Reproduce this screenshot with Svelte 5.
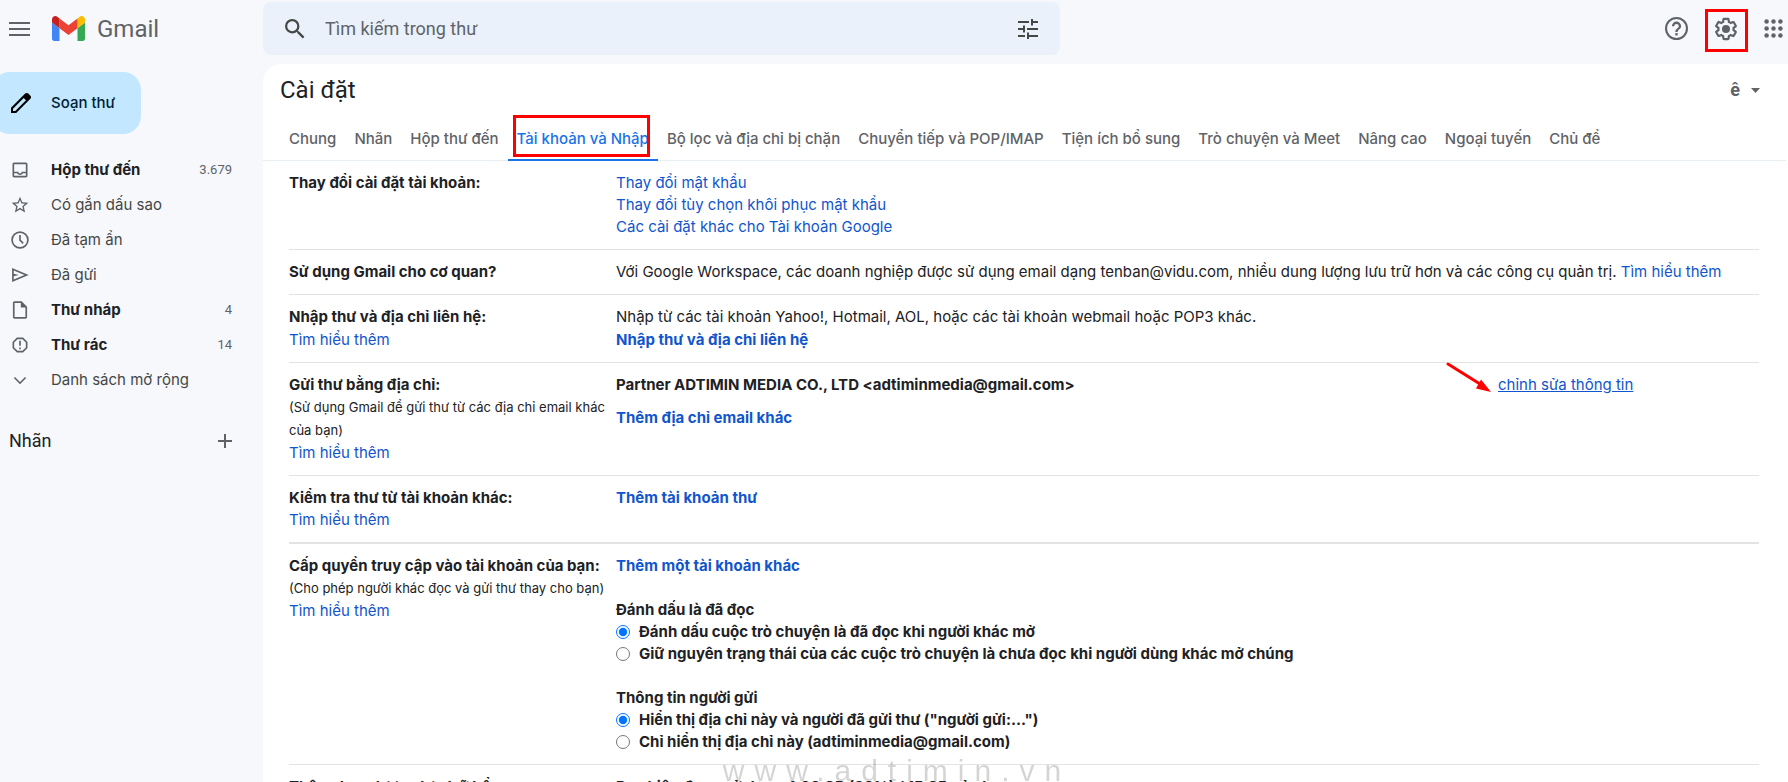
<script lang="ts">
  let query = '';
  let markRead = 'read';
  let sender = 'both';

  const folders = [
    { label: 'Hộp thư đến', icon: 'inbox', count: '3.679', bold: true },
    { label: 'Có gắn dấu sao', icon: 'star', count: '', bold: false },
    { label: 'Đã tạm ẩn', icon: 'clock', count: '', bold: false },
    { label: 'Đã gửi', icon: 'send', count: '', bold: false },
    { label: 'Thư nháp', icon: 'draft', count: '4', bold: true },
    { label: 'Thư rác', icon: 'spam', count: '14', bold: true },
    { label: 'Danh sách mở rộng', icon: 'more', count: '', bold: false }
  ];

  const icons: Record<string, string> = {
    inbox: 'M19 3H5c-1.1 0-2 .9-2 2v14c0 1.100.9 2 2 2h14c1.100 0 2-.9 2-2V5c0-1.100-.9-2-2-2zm0 16H5v-3h3.560c.69 1.190 1.970 2 3.450 2s2.750-.81 3.450-2H19v3zm0-5h-4.990c0 1.100-.9 2-2 2s-2-.9-2-2H5V5h14v9z',
    star: 'M22 9.240l-7.190-.62L12 2 9.190 8.630 2 9.240l5.460 4.730L5.820 21 12 17.270 18.180 21l-1.630-7.030L22 9.240zM12 15.400l-3.760 2.270 1-4.280-3.320-2.880 4.380-.38L12 6.100l1.710 4.040 4.380.38-3.320 2.880 1 4.280L12 15.400z',
    clock: 'M12 1.500a10.500 10.500 0 1 0 0 21 10.500 10.500 0 0 0 0-21zm0 19a8.500 8.500 0 1 1 0-17 8.500 8.500 0 0 1 0 17zM13 6h-2v6.500l4.200 4.200 1.300-1.300-3.500-3.600V6z',
    send: 'M2.500 3.500v17L22.500 12l-20-8.500zM4.500 6.500L17.400 12 4.500 17.500V13.500l6-1.500-6-1.500v-4z',
    draft: 'M14 1.500H5.500c-1.100 0-2 .9-2 2v17c0 1.100.9 2 2 2h13c1.100 0 2-.9 2-2V8L14 1.500zm4.500 19h-13v-17H13V9h5.500v11.500z',
    spam: 'M15.730 3H8.270L3 8.270v7.460L8.270 21h7.460L21 15.730V8.270L15.730 3zM19 14.900L14.900 19H9.100L5 14.900V9.100L9.100 5h5.800L19 9.100v5.800zM11 7h2v6h-2zM11 15h2v2h-2z',
    more: 'M18 8.300L12 14.300 6 8.300 4.600 9.700l7.400 7.400 7.400-7.400z'
  };

  const tabs = [
    'Chung',
    'Nhãn',
    'Hộp thư đến',
    'Tài khoản và Nhập',
    'Bộ lọc và địa chỉ bị chặn',
    'Chuyển tiếp và POP/IMAP',
    'Tiện ích bổ sung',
    'Trò chuyện và Meet',
    'Nâng cao',
    'Ngoại tuyến',
    'Chủ đề'
  ];
  let active = 'Tài khoản và Nhập';

  const dots = [4, 12, 20];
</script>

<div class="app">
  <header>
    <div class="brand">
      <button class="icon" aria-label="Trình đơn chính">
        <svg viewBox="0 0 21 14" width="21" height="14"><path d="M0 0h21v2H0zM0 6h21v2H0zM0 12h21v2H0z" /></svg>
      </button>
      <a class="logo" href="#inbox">
        <svg viewBox="52 42 88 66" width="33" height="25" aria-hidden="true">
          <path fill="#4285f4" d="M58 108h14V74L52 59v43c0 3.320 2.690 6 6 6" />
          <path fill="#34a853" d="M120 108h14c3.320 0 6-2.690 6-6V59l-20 15" />
          <path fill="#fbbc04" d="M120 48v26l20-15v-8c0-7.420-8.470-11.650-14.400-7.200" />
          <path fill="#ea4335" d="M72 74V48l24 18 24-18v26L96 92" />
          <path fill="#c5221f" d="M52 51v8l20 15V48l-5.600-4.200c-5.940-4.450-14.400-.22-14.400 7.200" />
        </svg>
        <span>Gmail</span>
      </a>
    </div>

    <form class="search" on:submit|preventDefault>
      <button class="icon" aria-label="Tìm kiếm">
        <svg viewBox="3 3 18 18" width="20" height="20"><path d="M15.500 14h-.79l-.28-.27A6.470 6.470 0 0 0 16 9.500 6.500 6.500 0 1 0 9.500 16c1.610 0 3.090-.59 4.230-1.570l.27.28v.79l5 4.990L20.490 19l-4.990-5zm-6 0a4.500 4.500 0 1 1 0-9 4.500 4.500 0 0 1 0 9z" /></svg>
      </button>
      <input type="text" placeholder="Tìm kiếm trong thư" aria-label="Tìm kiếm trong thư" bind:value={query} />
      <button type="button" class="icon" aria-label="Tùy chọn tìm kiếm">
        <svg viewBox="0 0 20 20" width="20" height="20"><path d="M0 2h11v2H0zM13 0h2v2h5v2h-5v2.500h-2zM0 9h5V6.500h2v7H5V11H0zM9 9h11v2H9zM0 16h7v2H0zM9 13.500h2V16h9v2h-9v2.500H9z" /></svg>
      </button>
    </form>

    <div class="tools">
      <button class="icon" aria-label="Hỗ trợ">
        <svg viewBox="2 2 20 20" width="23" height="23"><path d="M11 18h2v-2h-2v2zm1-16a10 10 0 1 0 0 20 10 10 0 0 0 0-20zm0 18.200a8.200 8.200 0 1 1 0-16.400 8.200 8.200 0 0 1 0 16.400zM12 6a4 4 0 0 0-4 4h2a2 2 0 1 1 4 0c0 2-3 1.750-3 5h2c0-2.250 3-2.500 3-5a4 4 0 0 0-4-4z" /></svg>
      </button>
      <button class="icon marked" aria-label="Cài đặt">
        <svg viewBox="1 1 22 22" width="24" height="24">
          <path d="M13.850 22.250h-3.700c-.74 0-1.360-.54-1.450-1.270l-.27-1.890c-.27-.14-.53-.29-.79-.46l-1.800.72c-.7.26-1.470-.03-1.810-.65L2.200 15.530c-.35-.66-.2-1.440.36-1.880l1.530-1.190c-.01-.15-.02-.3-.02-.46 0-.15.01-.31.02-.46l-1.520-1.190c-.59-.45-.74-1.260-.37-1.880l1.850-3.190c.34-.62 1.110-.9 1.790-.63l1.810.73c.26-.17.52-.32.78-.46l.27-1.910c.09-.7.71-1.250 1.440-1.250h3.700c.74 0 1.360.54 1.450 1.270l.27 1.890c.27.14.53.29.79.46l1.800-.72c.71-.26 1.480.03 1.820.65l1.840 3.180c.36.66.2 1.440-.36 1.880l-1.520 1.190c.01.15.02.3.02.46s-.01.31-.02.46l1.520 1.190c.56.45.72 1.230.37 1.860l-1.860 3.220c-.34.62-1.110.9-1.800.63l-1.800-.72c-.26.17-.52.32-.78.46l-.27 1.910c-.1.68-.72 1.220-1.460 1.220zm-3.230-2h2.760l.37-2.550.53-.22c.44-.18.88-.44 1.340-.78l.45-.34 2.380.96 1.380-2.400-2.030-1.580.07-.56c.03-.26.06-.51.06-.78s-.03-.53-.06-.78l-.07-.56 2.030-1.580-1.390-2.400-2.390.96-.45-.35c-.42-.32-.87-.58-1.330-.77l-.52-.22-.37-2.550h-2.760l-.37 2.550-.53.21c-.44.19-.88.44-1.340.79l-.45.33-2.380-.95-1.390 2.390 2.030 1.580-.07.56a7 7 0 0 0-.06.79c0 .26.02.53.06.78l.07.56-2.030 1.580 1.380 2.400 2.390-.96.45.35c.43.33.86.58 1.330.77l.53.22.38 2.550z" />
          <circle cx="12" cy="12" r="3.700" />
        </svg>
      </button>
      <button class="icon" aria-label="Ứng dụng của Google">
        <svg viewBox="1 1 22 22" width="19" height="19">
          {#each dots as cy}
            {#each dots as cx}
              <circle {cx} {cy} r="2.600" />
            {/each}
          {/each}
        </svg>
      </button>
    </div>
  </header>

  <div class="body">
    <aside>
      <button class="compose">
        <svg viewBox="0 0 22 22" width="22" height="22"><path fill-rule="evenodd" d="M1 21v-5.200L15.200 1.600c.9-.9 2.200-.9 3.100 0l2.100 2.100c.9.9.9 2.200 0 3.100L6.200 21H1zm2-2h2.300L16 8.300 13.700 6 3 16.700V19z" /></svg>
        Soạn thư
      </button>
      <nav>
        {#each folders as f}
          <a href="#{f.icon}" class:bold={f.bold}>
            <svg viewBox="0 0 24 24" width="20" height="20" aria-hidden="true"><path fill-rule="evenodd" d={icons[f.icon]} /></svg>
            <span class="name">{f.label}</span>
            <span class="count">{f.count}</span>
          </a>
        {/each}
      </nav>
      <div class="labels">
        <h2>Nhãn</h2>
        <button class="icon" aria-label="Tạo nhãn mới">
          <svg viewBox="0 0 14 14" width="14" height="14"><path d="M6 0h2v6h6v2H8v6H6V8H0V6h6z" /></svg>
        </button>
      </div>
    </aside>

    <main>
      <div class="title">
        <h1>Cài đặt</h1>
        <button class="lang" aria-label="Công cụ nhập liệu">
          <b>ê</b>
          <svg viewBox="0 0 9 5" width="9" height="5"><path d="M0 0h9L4.500 5z" /></svg>
        </button>
      </div>

      <div class="tabs" role="tablist">
        {#each tabs as tab}
          <button role="tab" aria-selected={tab === active} class:active={tab === active} on:click={() => (active = tab)}>{tab}</button>
        {/each}
      </div>

      <div class="settings">
        <section>
          <div class="label"><h3>Thay đổi cài đặt tài khoản:</h3></div>
          <div class="value">
            <a href="#password">Thay đổi mật khẩu</a>
            <a href="#recovery">Thay đổi tùy chọn khôi phục mật khẩu</a>
            <a href="#account">Các cài đặt khác cho Tài khoản Google</a>
          </div>
        </section>

        <section>
          <div class="label"><h3>Sử dụng Gmail cho cơ quan?</h3></div>
          <div class="value">
            <p>
              Với Google Workspace, các doanh nghiệp được sử dụng email dạng tenban@vidu.com, nhiều dung lượng lưu trữ hơn và các công cụ quản trị.
              <a href="#workspace">Tìm hiểu thêm</a>
            </p>
          </div>
        </section>

        <section class="roomy">
          <div class="label">
            <h3>Nhập thư và địa chỉ liên hệ:</h3>
            <a href="#help-import">Tìm hiểu thêm</a>
          </div>
          <div class="value">
            <p>Nhập từ các tài khoản Yahoo!, Hotmail, AOL, hoặc các tài khoản webmail hoặc POP3 khác.</p>
            <a class="strong" href="#import">Nhập thư và địa chỉ liên hệ</a>
          </div>
        </section>

        <section>
          <div class="label">
            <h3>Gửi thư bằng địa chỉ:</h3>
            <small>(Sử dụng Gmail để gửi thư từ các địa chỉ email khác của bạn)</small>
            <a href="#help-send">Tìm hiểu thêm</a>
          </div>
          <div class="value spaced">
            <div class="identity">
              <strong>Partner ADTIMIN MEDIA CO., LTD &lt;adtiminmedia@gmail.com&gt;</strong>
              <span class="edit">
                <svg class="arrow" viewBox="0 0 46 32" width="46" height="32" aria-hidden="true">
                  <path d="M2 2L34 22" fill="none" stroke="#f00" stroke-width="3" stroke-linecap="round" />
                  <path d="M45 30L35 17.500 30 26.500z" fill="#f00" />
                </svg>
                <a href="#edit">chỉnh sửa thông tin</a>
              </span>
            </div>
            <a class="strong" href="#add-address">Thêm địa chỉ email khác</a>
          </div>
        </section>

        <section class="thick">
          <div class="label">
            <h3>Kiểm tra thư từ tài khoản khác:</h3>
            <a href="#help-check">Tìm hiểu thêm</a>
          </div>
          <div class="value"><a class="strong" href="#add-mail">Thêm tài khoản thư</a></div>
        </section>

        <section>
          <div class="label">
            <h3>Cấp quyền truy cập vào tài khoản của bạn:</h3>
            <small>(Cho phép người khác đọc và gửi thư thay cho bạn)</small>
            <a href="#help-access">Tìm hiểu thêm</a>
          </div>
          <div class="value groups">
            <a class="strong" href="#add-account">Thêm một tài khoản khác</a>
            <fieldset>
              <legend>Đánh dấu là đã đọc</legend>
              <label><input type="radio" name="read" value="read" bind:group={markRead} />Đánh dấu cuộc trò chuyện là đã đọc khi người khác mở</label>
              <label><input type="radio" name="read" value="unread" bind:group={markRead} />Giữ nguyên trạng thái của các cuộc trò chuyện là chưa đọc khi người dùng khác mở chúng</label>
            </fieldset>
            <fieldset>
              <legend>Thông tin người gửi</legend>
              <label><input type="radio" name="sender" value="both" bind:group={sender} />Hiển thị địa chỉ này và người đã gửi thư ("người gửi:...")</label>
              <label><input type="radio" name="sender" value="one" bind:group={sender} />Chỉ hiển thị địa chỉ này (adtiminmedia@gmail.com)</label>
            </fieldset>
          </div>
        </section>

        <section>
          <div class="label"><h3>Thêm dung lượng lưu trữ bổ sung:</h3></div>
          <div class="value"><strong>Bạn hiện đang sử dụng 4,98 GB (33%) / 15 GB của bạn.</strong></div>
        </section>
      </div>
    </main>
  </div>

  <div class="watermark">www.adtimin.vn</div>
</div>

<style>
  :global(body) { background: #f6f8fc; }

  .app {
    height: 100vh;
    overflow: hidden;
    display: flex;
    flex-direction: column;
    background: #f6f8fc;
    color: #202124;
    font: 15px/22px Inter, "Noto Sans", sans-serif;
  }
  h1, h2, h3, p { margin: 0; font-size: inherit; }
  a { color: #1155cc; text-decoration: none; }
  button {
    border: none;
    padding: 0;
    background: none;
    color: inherit;
    font: inherit;
    cursor: pointer;
  }
  svg { display: block; flex-shrink: 0; fill: currentColor; }
  .icon { display: flex; color: #5f6368; }

  header {
    display: flex;
    align-items: center;
    flex-shrink: 0;
    height: 64px;
    padding-bottom: 7px;
    box-sizing: border-box;
    font-family: Roboto, sans-serif;
  }
  .brand {
    display: flex;
    align-items: center;
    gap: 22px;
    width: 263px;
    padding-left: 9px;
    box-sizing: border-box;
  }
  .logo {
    display: flex;
    align-items: center;
    gap: 12px;
    color: #5f6368;
    font-size: 24px;
  }
  .search {
    display: flex;
    align-items: center;
    gap: 20px;
    flex: 0 1 797px;
    height: 53px;
    padding: 0 22px;
    box-sizing: border-box;
    border-radius: 8px;
    background: #eaf1fb;
  }
  .search .icon { color: #444746; }
  .search input {
    flex: 1;
    min-width: 0;
    border: none;
    outline: none;
    padding: 0;
    background: none;
    font: inherit;
    font-size: 18px;
    color: #202124;
  }
  .search input::placeholder { color: #5f6368; opacity: 1; }
  .tools {
    display: flex;
    align-items: center;
    gap: 26px;
    margin-left: auto;
    padding-right: 5px;
  }
  .marked { position: relative; }
  .marked::after {
    content: '';
    position: absolute;
    inset: -8px -10px -11px -9px;
    border: 3px solid #f00;
  }

  .body { display: flex; flex: 1; min-height: 0; }
  aside { width: 263px; flex-shrink: 0; padding-top: 8px; box-sizing: border-box; }
  .compose {
    display: flex;
    align-items: center;
    gap: 19px;
    height: 62px;
    margin-left: -8px;
    padding: 0 26px 0 18px;
    border-radius: 18px;
    background: #c2e7ff;
    color: #001d35;
    font-weight: 500;
  }
  .compose svg { color: #000; }
  nav { padding-top: 18px; }
  nav a {
    display: flex;
    align-items: center;
    height: 35px;
    padding: 0 31px 0 10px;
    color: #444746;
  }
  nav svg { margin-right: 21px; color: #5f6368; }
  .name { flex: 1; }
  .count { font: 13px Roboto, sans-serif; color: #5f6368; }
  nav .bold .name { font-weight: 700; color: #202124; }
  .labels {
    display: flex;
    align-items: center;
    justify-content: space-between;
    padding: 33px 31px 0 9px;
  }
  .labels h2 { font: 18px/22px Roboto, sans-serif; }

  main {
    flex: 1;
    min-width: 0;
    background: #fff;
    border-top-left-radius: 18px;
  }
  .title {
    display: flex;
    justify-content: space-between;
    align-items: center;
    height: 52px;
    padding: 0 28px 0 17px;
    font-family: Roboto, sans-serif;
  }
  .title h1 { font-size: 24px; line-height: 28px; font-weight: 400; }
  .lang { display: flex; align-items: center; gap: 11px; color: #5f6368; font-size: 18px; }
  .tabs {
    display: flex;
    height: 44px;
    padding-left: 17px;
    border-bottom: 1px solid #e8eef3;
    margin-right: 2px;
  }
  .tabs button {
    height: 45px;
    padding: 2px 9px 0;
    border-bottom: 2px solid transparent;
    box-sizing: border-box;
    color: #5f6368;
    font-weight: 500;
    white-space: nowrap;
  }
  .tabs .active {
    position: relative;
    border-color: #1a73e8;
    color: #1a73e8;
  }
  .tabs .active::after {
    content: '';
    position: absolute;
    inset: -1px 8px 2px 5px;
    border: 3px solid #f00;
  }

  .settings { padding: 0 29px 0 26px; }
  section {
    display: grid;
    grid-template-columns: 327px 1fr;
    padding: 11px 0;
    border-bottom: 1px solid #e3e3e3;
  }
  .thick { border-bottom-width: 2px; }
  .label, .value { display: flex; flex-direction: column; align-items: flex-start; }
  .roomy > div { gap: 1px; }
  h3, strong, .strong, fieldset { font-weight: 700; white-space: nowrap; }
  small { font-size: 13px; line-height: 23px; }
  .spaced { gap: 11px; }
  .identity { display: flex; justify-content: space-between; width: 100%; }
  .edit { position: relative; width: 261px; }
  .edit a { text-decoration: underline; }
  .arrow { position: absolute; right: 100%; top: -12px; margin-right: 6px; }
  .groups { gap: 22px; }
  fieldset { border: none; margin: 0; padding: 0; }
  legend { padding: 0; }
  label { display: flex; align-items: center; }
  label input { width: 14px; height: 14px; margin: 0 9px 0 0; }

  .watermark {
    position: fixed;
    left: 6px;
    right: 0;
    bottom: -6px;
    text-align: center;
    font: 30px/34px "Liberation Sans", sans-serif;
    letter-spacing: 10px;
    color: rgba(0, 0, 0, 0.17);
    pointer-events: none;
  }
</style>
